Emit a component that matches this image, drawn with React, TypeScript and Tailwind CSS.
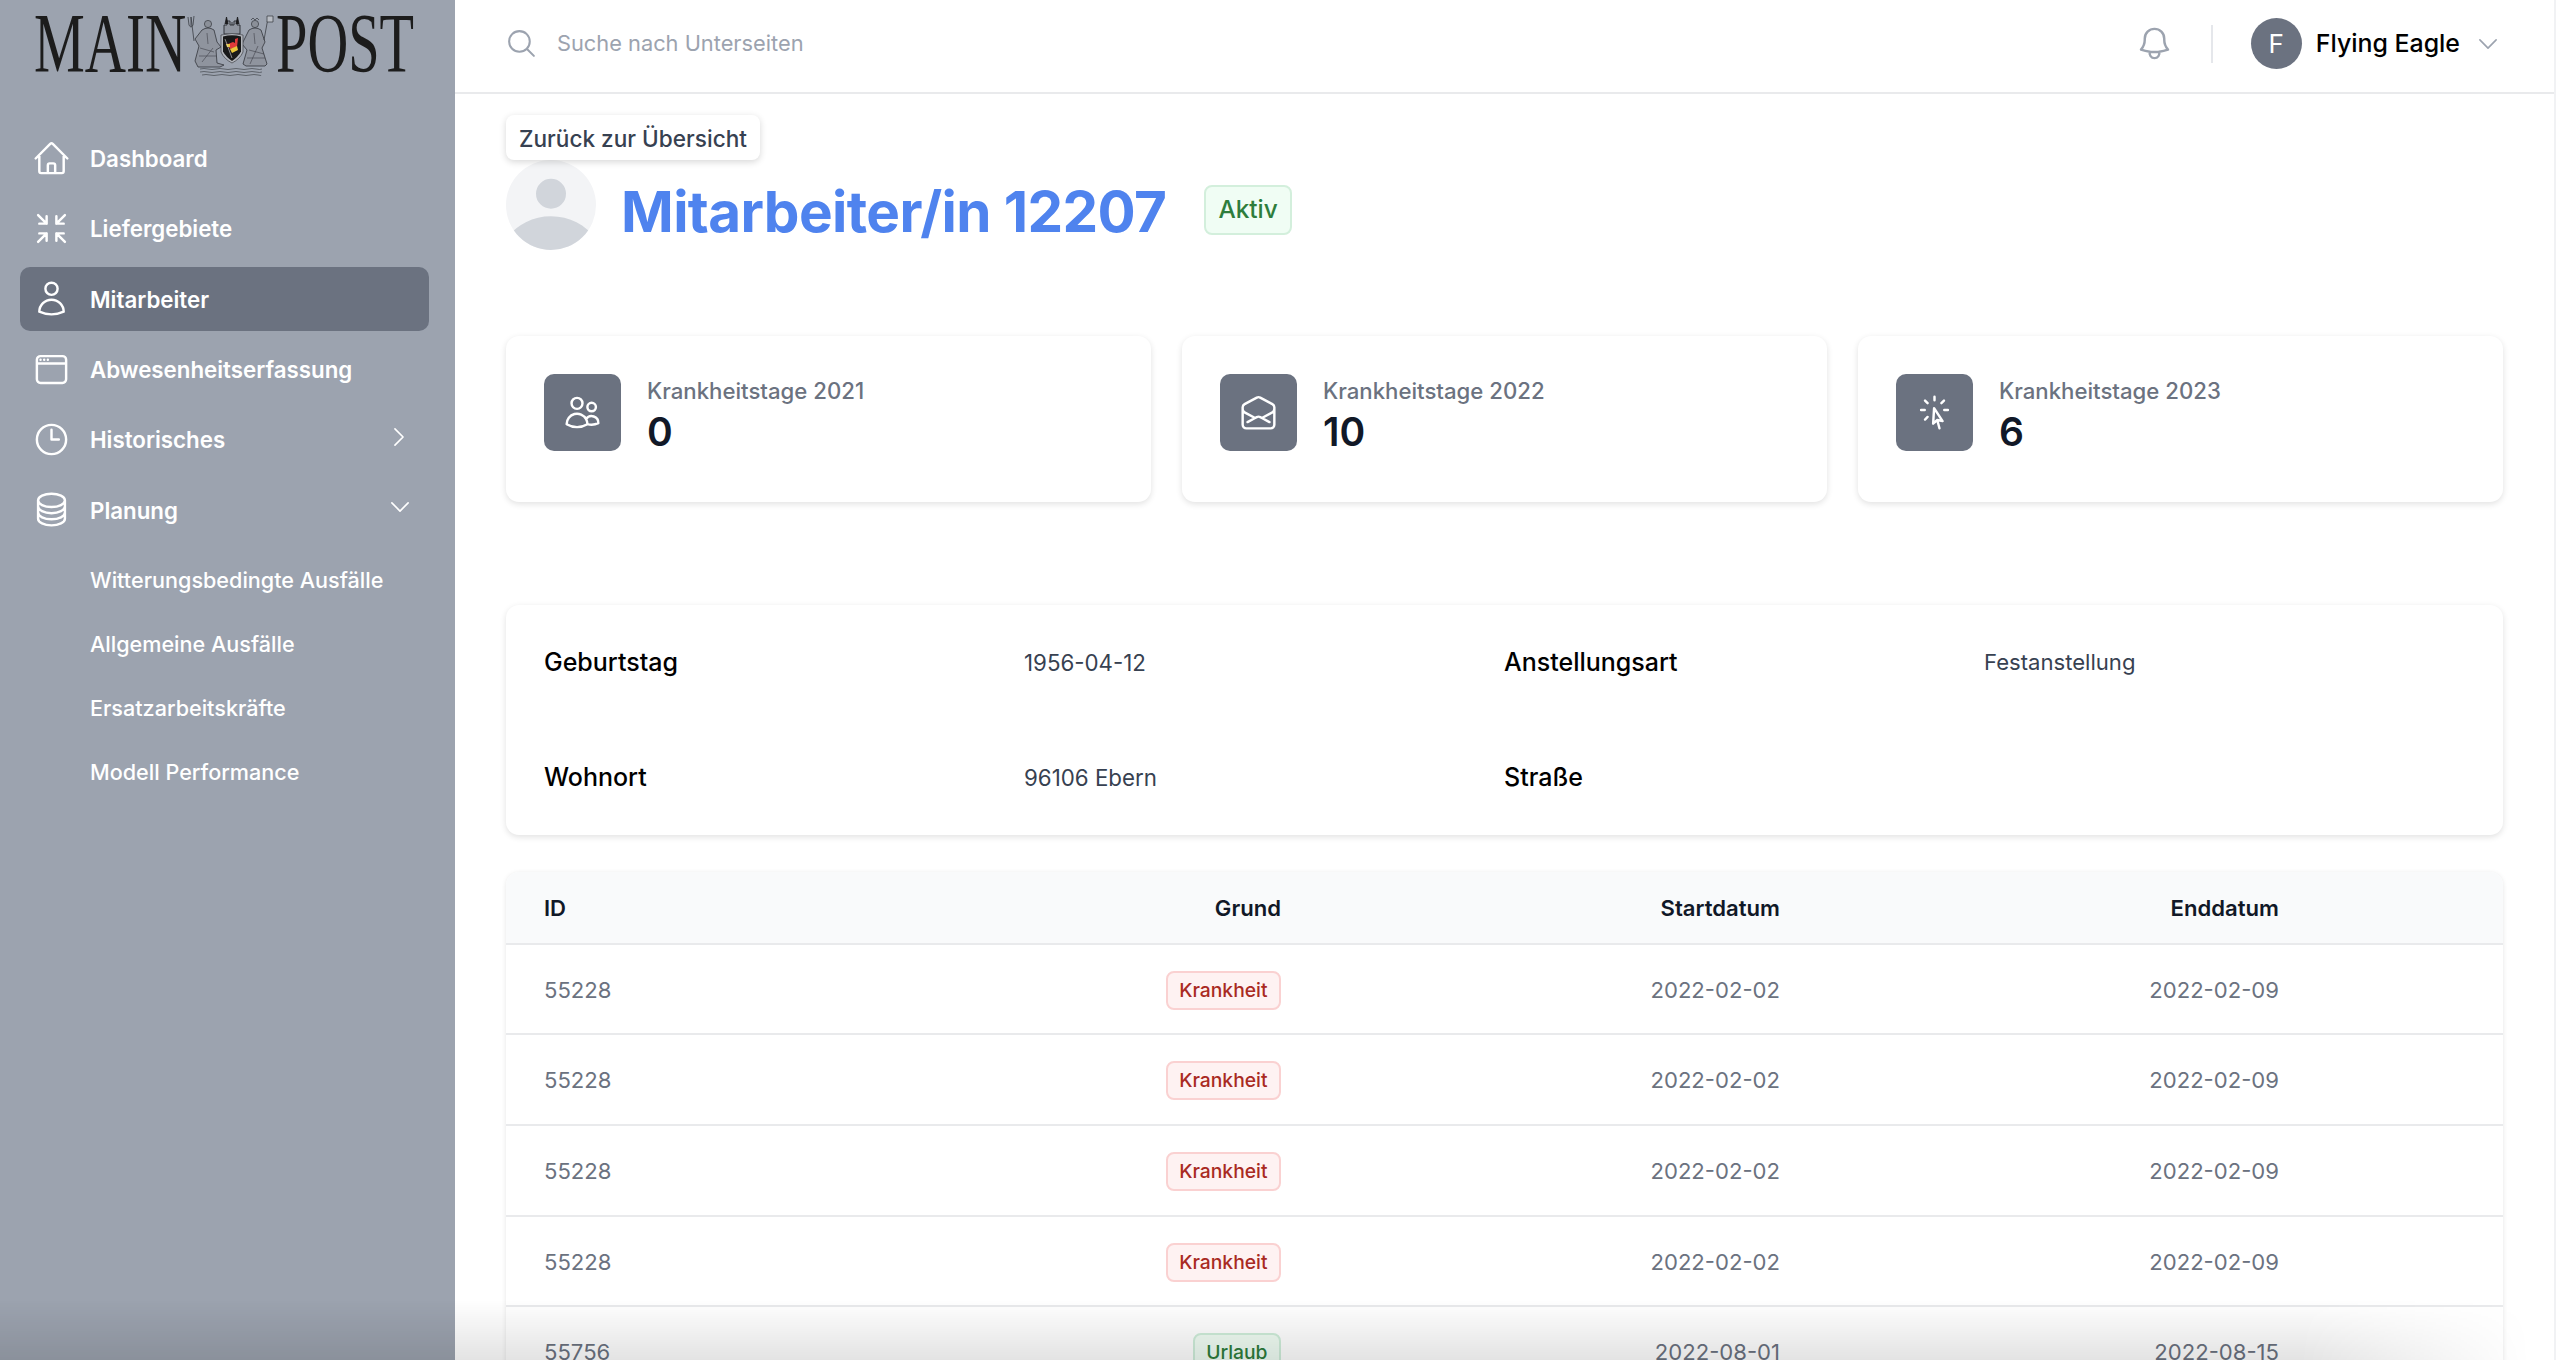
import React from "react";
import {
  HiOutlineHome,
  HiOutlineArrowsPointingIn,
  HiOutlineUser,
  HiOutlineWindow,
  HiOutlineClock,
  HiOutlineCircleStack,
  HiOutlineChevronRight,
  HiOutlineChevronDown,
  HiOutlineUsers,
  HiOutlineEnvelopeOpen,
  HiOutlineCursorArrowRays,
  HiOutlineMagnifyingGlass,
  HiOutlineBell,
} from "react-icons/hi2";

function Crest() {
  return (
    <svg viewBox="6 0 90 75" className="w-[90px] h-[75px] shrink-0" fill="none">
      {/* trident */}
      <path d="M14 35 L11 11 M8 11 L9 19 Q11 23 13 19 L14 10 M11 11 V20" stroke="#3a3d44" strokeWidth="0.8" />
      {/* left figure */}
      <circle cx="28" cy="18" r="3.6" fill="#8b9099" stroke="#33363c" strokeWidth="0.7" />
      <path d="M22 24 Q28 20 34 24 L37 36 L41 41 L36 44 L37 57 L44 59 L40 61 H18 L15 55 L19 40 L15 33 L22 24 Z" fill="#8f949e" stroke="#33363c" strokeWidth="0.8" />
      <path d="M20 42 L34 46 M19 50 L36 50 M22 56 L33 42 M27 27 L28 38" stroke="#3f4249" strokeWidth="0.6" />
      {/* right figure */}
      <circle cx="75" cy="18" r="3.6" fill="#8b9099" stroke="#33363c" strokeWidth="0.7" />
      <path d="M71 14 L73 12 L75 14 L77 12 L79 14" stroke="#33363c" strokeWidth="0.7" />
      <path d="M69 24 Q75 20 81 24 L85 36 L82 42 L87 58 L85 60 H66 L63 58 L67 44 L62 38 L69 24 Z" fill="#8f949e" stroke="#33363c" strokeWidth="0.8" />
      <path d="M69 44 L84 48 M67 52 L85 52 M70 58 L78 40 M74 27 L75 38" stroke="#3f4249" strokeWidth="0.6" />
      {/* flag staff */}
      <path d="M84 34 L88 12" stroke="#3a3d44" strokeWidth="0.8" />
      <path d="M87 10 H93 V16 H87 Z" fill="#b9bdc4" stroke="#33363c" strokeWidth="0.7" />
      {/* castle */}
      <path d="M44 28 V19 H47 V15 H50 V19 H54 V15 H57 V19 H60 V28 Z" fill="#8f949e" stroke="#26282c" strokeWidth="0.9" />
      <path d="M45 18 L46.5 11 L48 18 M52 16 V19 M56 18 L57.5 11 L59 18" fill="#1b1b1d" stroke="#1b1b1d" strokeWidth="0.8" />
      {/* shield */}
      <path d="M41 29 Q52 26 63 29 V46 Q60 53 52 57 Q44 53 41 46 Z" fill="#b3b6bc" stroke="#4a4d53" strokeWidth="0.8" />
      <path d="M43 30.5 Q52 28 61 30.5 V45.5 Q58 51 52 55 Q46 51 43 45.5 Z" fill="#191919" />
      <path d="M46 35 L49 40 L48 38 L53 36 L55 37 V33 L58 32 L57 41 L50 43 Z" fill="#e03a3a" />
      <path d="M50 43 L57 40 L58 44 L52 47 Z" fill="#e9c63c" />
      <path d="M46 38 H50 V41 H47 Z" fill="#e9c63c" />
      <path d="M45 33 L52 52" stroke="#d9d9d9" strokeWidth="0.6" />
      {/* waves */}
      <path d="M20 63 Q24 62 28 63 T36 63 T44 63 T52 63 T60 63 T68 63 T76 63 T82 63" stroke="#44474d" strokeWidth="0.7" />
      <path d="M20 66 Q24 65 28 66 T36 66 T44 66 T52 66 T60 66 T68 66 T76 66 T82 66" stroke="#44474d" strokeWidth="0.7" />
      <path d="M22 69 Q26 68 30 69 T38 69 T46 69 T54 69 T62 69 T70 69 T78 69 T81 69" stroke="#44474d" strokeWidth="0.7" />
    </svg>
  );
}

function Logo() {
  const cls =
    "block origin-left font-['Liberation_Serif',serif] text-[84px] leading-[75px] text-[#1c1c1c] whitespace-nowrap";
  return (
    <div className="flex h-[75px] pl-[34px] mt-[6px]">
      <div className="w-[152px] shrink-0">
        <span className={cls + " scale-x-[0.68]"}>MAIN</span>
      </div>
      <Crest />
      <div className="w-[138px] shrink-0">
        <span className={cls + " scale-x-[0.672]"}>POST</span>
      </div>
    </div>
  );
}

const navItems = [
  { label: "Dashboard", Icon: HiOutlineHome },
  { label: "Liefergebiete", Icon: HiOutlineArrowsPointingIn },
  { label: "Mitarbeiter", Icon: HiOutlineUser, active: true },
  { label: "Abwesenheitserfassung", Icon: HiOutlineWindow },
  { label: "Historisches", Icon: HiOutlineClock, chevron: "right" },
  { label: "Planung", Icon: HiOutlineCircleStack, chevron: "down" },
];

const subItems = ["Witterungsbedingte Ausfälle", "Allgemeine Ausfälle", "Ersatzarbeitskräfte", "Modell Performance"];

function Sidebar() {
  return (
    <aside className="w-[455px] shrink-0 h-full bg-[#9ca3af] flex flex-col">
      <Logo />
      <nav className="mt-[45px] pl-[20px] pr-[26px] flex flex-col gap-[6.4px]">
        {navItems.map(({ label, Icon, active, chevron }) => (
          <div
            key={label}
            className={
              "relative flex items-center h-[64px] pl-[12px] gap-[19px] rounded-[10px] text-white text-[22.3px] font-semibold " +
              (active ? "bg-[#6b7280]" : "")
            }
          >
            <Icon className="w-[39px] h-[39px] shrink-0" />
            <span className="pt-[1px]">{label}</span>
            {chevron === "right" && (
              <HiOutlineChevronRight className="absolute right-[17px] top-[16px] w-[26px] h-[26px]" />
            )}
            {chevron === "down" && (
              <HiOutlineChevronDown className="absolute right-[16px] top-[16px] w-[26px] h-[26px]" />
            )}
          </div>
        ))}
        <div className="flex flex-col">
          {subItems.map((s) => (
            <div key={s} className="flex items-center h-[64px] pl-[70px] text-white text-[21.6px] font-medium">
              {s}
            </div>
          ))}
        </div>
      </nav>
    </aside>
  );
}

function Header() {
  return (
    <header className="h-[94px] shrink-0 flex items-center pl-[50px] pr-[53px] pb-[5px] border-b-2 border-[#e9eaec] bg-white">
      <HiOutlineMagnifyingGlass className="w-[33px] h-[33px] text-[#9ca3af] shrink-0" />
      <span className="ml-[19px] text-[21.8px] text-[#9ca3af]">Suche nach Unterseiten</span>
      <div className="ml-auto flex items-center">
        <HiOutlineBell className="w-[39px] h-[39px] text-[#9ca3af]" />
        <div className="w-[2px] h-[38px] bg-[#e5e7eb] ml-[37px] mr-[38px]" />
        <div className="w-[51px] h-[51px] rounded-full bg-[#6b7280] flex items-center justify-center text-white text-[26px]">
          F
        </div>
        <span className="ml-[14px] text-[24.9px] font-medium text-black">Flying Eagle</span>
        <HiOutlineChevronDown className="ml-[15px] w-[26px] h-[26px] text-[#9ca3af]" />
      </div>
    </header>
  );
}

function StatCard({ title, value, Icon }: { title: string; value: string; Icon: React.ComponentType<{ className?: string }> }) {
  return (
    <div className="h-[166px] rounded-[13px] bg-white shadow-[0_2px_6px_rgba(0,0,0,0.12)] pl-[38px] pt-[38px] flex gap-[26px]">
      <div className="w-[77px] h-[77px] rounded-[10px] bg-[#6b7280] flex items-center justify-center">
        <Icon className="w-[39px] h-[39px] text-white" />
      </div>
      <div className="flex flex-col">
        <span className="text-[22.2px] leading-[33px] font-medium text-[#6b7280]">{title}</span>
        <span className="text-[39px] leading-[50px] font-semibold text-[#111827]">{value}</span>
      </div>
    </div>
  );
}

function Badge({ text, kind }: { text: string; kind: "red" | "green" }) {
  return (
    <span
      className={
        "inline-flex items-center h-[39px] px-[11.5px] rounded-[8px] border-2 text-[19.3px] font-medium align-middle " +
        (kind === "red"
          ? "bg-[#fef2f2] border-[#fad1d1] text-[#a92a22]"
          : "bg-[#f0fdf4] border-[#cfeeda] text-[#2e7d3c]")
      }
    >
      {text}
    </span>
  );
}

const rows = [
  { id: "55228", reason: "Krankheit", kind: "red", start: "2022-02-02", end: "2022-02-09", h: "h-[90px]" },
  { id: "55228", reason: "Krankheit", kind: "red", start: "2022-02-02", end: "2022-02-09", h: "h-[91px]" },
  { id: "55228", reason: "Krankheit", kind: "red", start: "2022-02-02", end: "2022-02-09", h: "h-[91px]" },
  { id: "55228", reason: "Krankheit", kind: "red", start: "2022-02-02", end: "2022-02-09", h: "h-[90px]" },
  { id: "55756", reason: "Urlaub", kind: "green", start: "2022-08-01", end: "2022-08-15", h: "h-[90px]" },
] as const;

function Table() {
  return (
    <div className="mt-[37px] rounded-t-[13px] bg-white shadow-[0_1px_5px_rgba(0,0,0,0.1)] overflow-hidden">
      <table className="w-full table-fixed border-collapse text-[22.1px]">
        <colgroup>
          <col className="w-[400px]" />
          <col className="w-[413px]" />
          <col className="w-[499px]" />
          <col className="w-[499px]" />
          <col />
        </colgroup>
        <thead>
          <tr className="h-[72px] bg-[#f9fafb] border-b-2 border-[#e9eaec] text-[#111827]">
            <th className="pl-[38px] pt-[3px] text-left font-semibold">ID</th>
            <th className="pr-[38px] pt-[3px] text-right font-semibold">Grund</th>
            <th className="pr-[38px] pt-[3px] text-right font-semibold">Startdatum</th>
            <th className="pr-[38px] pt-[3px] text-right font-semibold">Enddatum</th>
            <th />
          </tr>
        </thead>
        <tbody className="text-[#6b7280]">
          {rows.map((r, i) => (
            <tr key={i} className={r.h + " border-b-2 border-[#e9eaec]"}>
              <td className="pl-[38px] pt-[3px]">{r.id}</td>
              <td className="pr-[38px] pt-[2px] text-right">
                <Badge text={r.reason} kind={r.kind} />
              </td>
              <td className="pr-[38px] pt-[3px] text-right">{r.start}</td>
              <td className="pr-[38px] pt-[3px] text-right">{r.end}</td>
              <td />
            </tr>
          ))}
        </tbody>
      </table>
    </div>
  );
}

function Content() {
  return (
    <main className="flex-1 min-h-0 overflow-hidden pl-[51px] pr-[51px]">
      <div className="mt-[21px] flex w-fit items-center h-[45px] pt-[2px] px-[13px] rounded-[8px] bg-white shadow-[0_2px_7px_rgba(0,0,0,0.16)] relative z-10 text-[22.6px] font-medium text-[#374151]">
        Zurück zur Übersicht
      </div>
      <div className="flex items-center">
        <div className="w-[90px] h-[90px] rounded-full bg-[#f3f4f6] overflow-hidden shrink-0">
          <svg viewBox="0 0 24 24" className="w-full h-full text-[#d1d5db]" fill="currentColor">
            <path d="M24 20.993V24H0v-2.996A14.977 14.977 0 0112.004 15c4.904 0 9.26 2.354 11.996 5.993zM16.002 8.999a4 4 0 11-8 0 4 4 0 018 0z" />
          </svg>
        </div>
        <h1 className="ml-[25px] mt-[15px] text-[56.6px] leading-none font-bold text-[#4f83ee] -tracking-[0.6px] whitespace-nowrap">Mitarbeiter/in 12207</h1>
        <span className="ml-[38px] mt-[9px] inline-flex items-center h-[50px] px-[12px] rounded-[8px] bg-[#f0fdf4] border-2 border-[#d3efdc] text-[24.4px] font-medium text-[#2e7d3c]">
          Aktiv
        </span>
      </div>

      <div className="mt-[86px] grid grid-cols-3 gap-[31px]">
        <StatCard title="Krankheitstage 2021" value="0" Icon={HiOutlineUsers} />
        <StatCard title="Krankheitstage 2022" value="10" Icon={HiOutlineEnvelopeOpen} />
        <StatCard title="Krankheitstage 2023" value="6" Icon={HiOutlineCursorArrowRays} />
      </div>

      <div className="mt-[103px] h-[230px] rounded-[13px] bg-white shadow-[0_2px_6px_rgba(0,0,0,0.12)] px-[38px] pt-[39px] grid grid-cols-[480px_480px_480px_1fr] grid-rows-[38px_38px] gap-y-[77px] items-center">
        <span className="text-[25px] font-medium text-black">Geburtstag</span>
        <span className="text-[22.3px] text-[#374151]">1956-04-12</span>
        <span className="text-[25px] font-medium text-black">Anstellungsart</span>
        <span className="text-[22.1px] text-[#374151]">Festanstellung</span>
        <span className="text-[25px] font-medium text-black">Wohnort</span>
        <span className="text-[22.3px] text-[#374151]">96106 Ebern</span>
        <span className="text-[25px] font-medium text-black">Straße</span>
        <span />
      </div>

      <Table />
    </main>
  );
}

export default function App() {
  return (
    <div className="relative flex h-screen w-full overflow-hidden bg-white font-['Inter',sans-serif]">
      <Sidebar />
      <div className="flex-1 min-w-0 flex flex-col border-r-2 border-[#f1f2f4]">
        <Header />
        <Content />
      </div>
      <div className="absolute left-0 right-0 bottom-0 h-[60px] pointer-events-none bg-[linear-gradient(to_bottom,rgba(0,0,0,0),rgba(0,0,0,0.11))] [mask-image:linear-gradient(to_right,black_90%,transparent_99%)]" />
    </div>
  );
}
